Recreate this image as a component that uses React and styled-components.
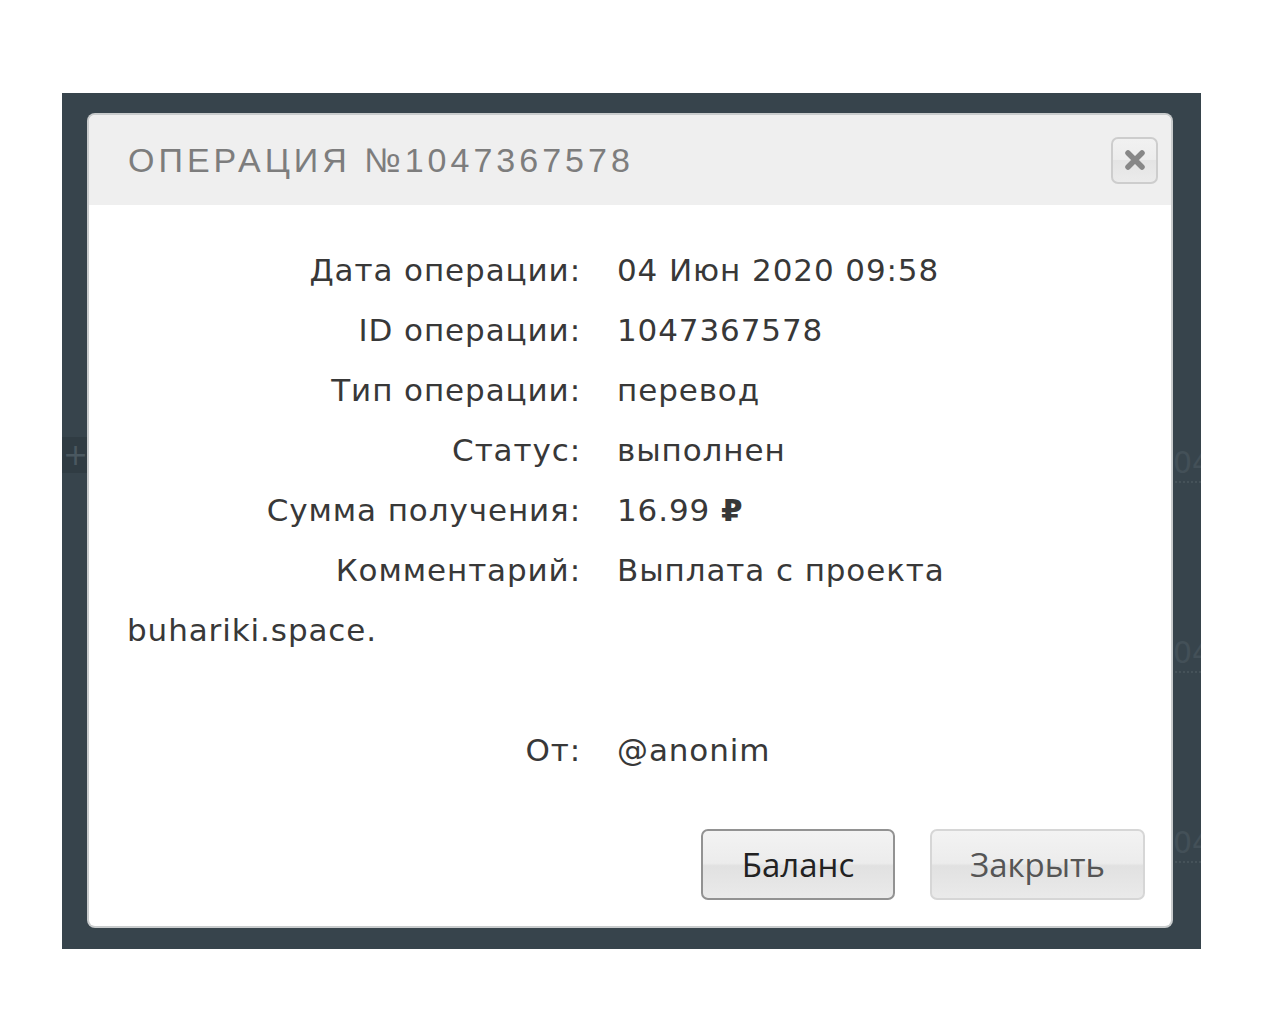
import React from 'react'
import styled, { createGlobalStyle } from 'styled-components'

const GlobalStyle = createGlobalStyle`
  body {
    margin: 0;
    background: #fff;
  }
`

const Page = styled.div`
  padding: 93px 0 0 62px;
  height: 1024px;
  box-sizing: border-box;
`

const Backdrop = styled.div`
  position: relative;
  width: 1139px;
  height: 856px;
  background: #37444c;
  overflow: hidden;
  display: grid;
  grid-template-columns: 27px 1fr 30px;
`

const SideRail = styled.div`
  display: flex;
  flex-direction: column;
  align-items: center;
  padding-top: 344px;
  gap: 120px;
`

const RailButton = styled.div`
  width: 27px;
  height: 36px;
  background: #303c43;
  color: #4a5860;
  font: 30px/36px 'DejaVu Sans', sans-serif;
  text-align: center;
`

const ListColumn = styled.div`
  grid-column: 3;
  display: flex;
  flex-direction: column;
  padding-top: 352px;
  gap: 152px;
`

const GhostDate = styled.div`
  font: 30px/36px 'DejaVu Sans', sans-serif;
  color: #435058;
  border-bottom: 2px dotted #455259;
  white-space: nowrap;
  padding-left: 2px;
`

const Modal = styled.div`
  position: absolute;
  left: 27px;
  top: 22px;
  width: 1082px;
  height: 811px;
  background: #fff;
  border-radius: 6px;
  box-shadow: 0 0 0 2px #c9cccd;
  display: flex;
  flex-direction: column;
  overflow: hidden;
`

const Header = styled.div`
  height: 90px;
  background: #efefef;
  display: flex;
  align-items: center;
  justify-content: space-between;
  padding: 0 13px 0 39px;
  box-sizing: border-box;
`

const Title = styled.h2`
  margin: 0;
  font: 400 34px/1 'Liberation Sans', sans-serif;
  letter-spacing: 4px;
  color: #7d7d7d;
`

const CloseButton = styled.button`
  width: 47px;
  height: 47px;
  border: 2px solid #cdcdcd;
  border-radius: 7px;
  background: linear-gradient(#f1f1f1, #ececec 50%, #e4e4e4 50%, #ebebeb);
  display: flex;
  align-items: center;
  justify-content: center;
  padding: 0;
  cursor: pointer;
`

const Body = styled.div`
  flex: 1;
  padding: 35px 38px 0 38px;
  font: 400 31px/60px 'DejaVu Sans', sans-serif;
  letter-spacing: 0.9px;
  color: #383838;
`

const Row = styled.div`
  margin-bottom: ${(p) => (p.$gap ? '60px' : '0')};
`

const Label = styled.span`
  display: inline-block;
  width: 454px;
  margin-right: 36px;
  text-align: right;
`

const Currency = styled.b`
  font-weight: 700;
`

const Footer = styled.div`
  display: flex;
  justify-content: flex-end;
  gap: 35px;
  padding: 0 26px 26px 0;
`

const Button = styled.button`
  height: 71px;
  width: ${(p) => p.$width}px;
  border-radius: 7px;
  border: 2px solid ${(p) => (p.$primary ? '#929292' : '#d6d6d6')};
  color: ${(p) => (p.$primary ? '#222' : '#555')};
  background: linear-gradient(#f3f3f3, #ececec 48%, #e1e1e1 52%, #eaeaea);
  font: 400 33px/1 'Open Sans', sans-serif;
  cursor: pointer;
`

const rows = [
  ['Дата операции:', '04 Июн 2020 09:58'],
  ['ID операции:', '1047367578'],
  ['Тип операции:', 'перевод'],
  ['Статус:', 'выполнен'],
  ['Сумма получения:', <>16.99 <Currency>₽</Currency></>],
]

export default function App() {
  return (
    <>
      <GlobalStyle />
      <Page>
        <Backdrop>
          <SideRail>
            <RailButton>+</RailButton>
          </SideRail>
          <div />
          <ListColumn>
            <GhostDate>04</GhostDate>
            <GhostDate>04</GhostDate>
            <GhostDate>04</GhostDate>
          </ListColumn>

          <Modal>
            <Header>
              <Title>ОПЕРАЦИЯ №1047367578</Title>
              <CloseButton aria-label="close">
                <svg width="24" height="24" viewBox="0 0 24 24">
                  <path d="M5 5 L19 19 M19 5 L5 19" stroke="#878787" strokeWidth="5.5" strokeLinecap="round" />
                </svg>
              </CloseButton>
            </Header>
            <Body>
              {rows.map(([label, value]) => (
                <Row key={label}>
                  <Label>{label}</Label>
                  {value}
                </Row>
              ))}
              <Row $gap>
                <Label>Комментарий:</Label>
                Выплата с проекта buhariki.space.
              </Row>
              <Row>
                <Label>От:</Label>
                @anonim
              </Row>
            </Body>
            <Footer>
              <Button $primary $width={194}>Баланс</Button>
              <Button $width={215}>Закрыть</Button>
            </Footer>
          </Modal>
        </Backdrop>
      </Page>
    </>
  )
}
